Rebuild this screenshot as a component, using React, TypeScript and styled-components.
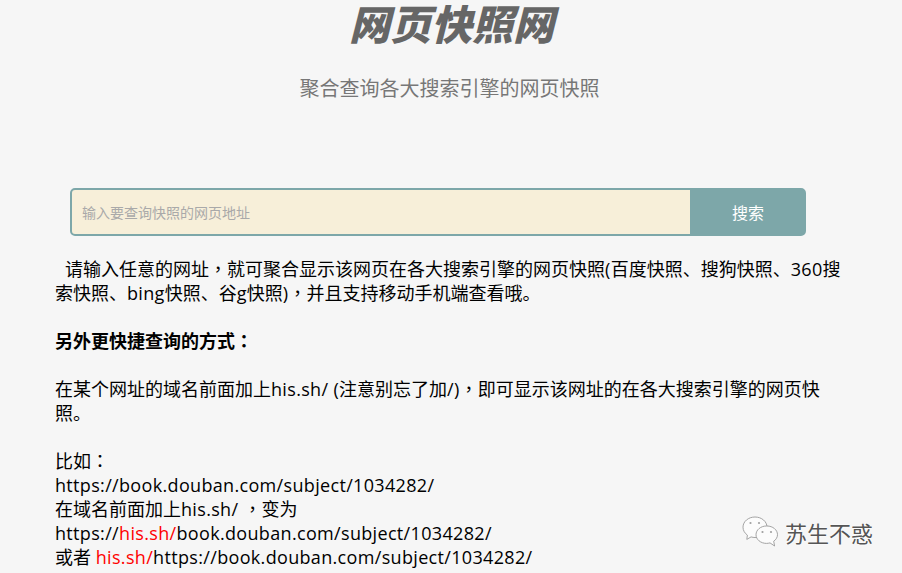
import React from "react";
import styled, { createGlobalStyle } from "styled-components";

const GlobalStyle = createGlobalStyle`
    html, body {
        margin: 0;
        padding: 0;
        height: 100%;
        overflow: hidden;
        background: #f6f6f6;
    }
    body {
        font-family: "Open Sans", "Noto Sans CJK SC", sans-serif;
    }
`;

const Page = styled.div`
    position: relative;
    width: 902px;
    height: 573px;
    overflow: hidden;
`;

const Header = styled.header`
    display: flex;
    flex-direction: column;
    align-items: center;
    padding-left: 1px;
`;

const Title = styled.h1`
    margin: 0;
    height: 46px;
    font-family: "Noto Sans CJK SC", sans-serif;
    font-size: 41px;
    line-height: 44px;
    font-weight: 900;
    font-style: italic;
    color: #666666;
`;

const Subtitle = styled.p`
    margin: 28px 4px 0 0;
    font-family: "Noto Sans CJK SC", sans-serif;
    font-size: 20px;
    line-height: 28px;
    color: #777777;
`;

const SearchForm = styled.form`
    display: flex;
    width: 736px;
    height: 48px;
    margin: 86px 0 0 70px;
    box-sizing: border-box;
    border: 2px solid #7da7a9;
    border-radius: 5px;
    background: #7da7a9;
    overflow: hidden;
`;

const SearchInput = styled.div`
    flex: 1;
    display: flex;
    align-items: center;
    padding-left: 10px;
    background: #f7efd9;
    font-family: "Noto Sans CJK SC", sans-serif;
    font-size: 14px;
    color: #a9a9a9;
`;

const SearchButton = styled.button`
    width: 114px;
    border: 0;
    padding: 0 0 0 2px;
    background: #7da7a9;
    color: #ffffff;
    font-family: "Noto Sans CJK SC", sans-serif;
    font-size: 16px;
`;

const Content = styled.div`
    width: 790px;
    margin: 21px 0 0 55px;
    font-size: 18px;
    line-height: 24px;
    color: #000000;
`;

const Paragraph = styled.p<{ $indent?: boolean }>`
    margin: 0 0 24px;
    text-indent: ${(props) => (props.$indent ? "10px" : "0")};
`;

const Latin = styled.span`
    display: inline-block;
    text-indent: 0;
    white-space: pre;
    letter-spacing: 0.33px;
`;

// centred full-width punctuation, as in the reference
const Punct = styled.span`
    display: inline-block;
    text-indent: 0;
    font-family: "Noto Sans CJK TC", sans-serif;
    line-height: 1;
`;

const Mark = styled(Latin)`
    color: #ff0000;
`;

const Watermark = styled.div`
    position: absolute;
    right: 29px;
    bottom: 25px;
    display: flex;
    align-items: center;
    gap: 7px;
    font-family: "Noto Sans CJK SC", sans-serif;
    font-size: 22px;
    color: #555555;
    text-shadow: 0 0 2px #ffffff, 0 0 2px #ffffff;
`;

const WechatIcon = () => (
    <svg width="36" height="32" viewBox="0 0 36 32" fill="#fcfcfc" stroke="#9a9a9a" strokeWidth="0.9">
        <path d="M13 1C6.4 1 1 5.5 1 11.2c0 3.2 1.7 6 4.4 7.9L4.8 23.4l4.3-2.5c1.3.4 2.6.6 3.9.6 6.6 0 12-4.6 12-10.3S19.6 1 13 1z" />
        <path d="M24.5 10c-5.8 0-10.5 3.9-10.5 8.7s4.7 8.7 10.5 8.7c1.2 0 2.4-.2 3.5-.5l4.6 3.1-.9-4.8c2.4-1.6 3.8-3.9 3.8-6.5 0-4.8-4.7-8.7-10.5-8.7z" />
        <circle cx="8.5" cy="7" r="1.1" fill="#a0a0a0" stroke="none" />
        <circle cx="17" cy="7" r="1.1" fill="#a0a0a0" stroke="none" />
        <circle cx="20.5" cy="16" r="1.1" fill="#a0a0a0" stroke="none" />
        <circle cx="29" cy="16" r="1.1" fill="#a0a0a0" stroke="none" />
    </svg>
);

export default function App() {
    return (
        <Page>
            <GlobalStyle />
            <Header>
                <Title>网页快照网</Title>
                <Subtitle>聚合查询各大搜索引擎的网页快照</Subtitle>
            </Header>
            <SearchForm>
                <SearchInput>输入要查询快照的网页地址</SearchInput>
                <SearchButton type="button">搜索</SearchButton>
            </SearchForm>
            <Content>
                <Paragraph $indent>
                    请输入任意的网址<Punct>，</Punct>就可聚合显示该网页在各大搜索引擎的网页快照<Latin>(</Latin>百度快照、搜狗快照、<Latin>360</Latin>搜索快照、<Latin>bing</Latin>快照、谷<Latin>g</Latin>快照<Latin>)</Latin><Punct>，</Punct>并且支持移动手机端查看哦。
                </Paragraph>
                <Paragraph>
                    <b>另外更快捷查询的方式<Punct>：</Punct></b>
                </Paragraph>
                <Paragraph>
                    在某个网址的域名前面加上<Latin>his.sh/ (</Latin>注意别忘了加<Latin>/)</Latin><Punct>，</Punct>即可显示该网址的在各大搜索引擎的网页快
                    <br />
                    照。
                </Paragraph>
                <Paragraph>
                    比如<Punct>：</Punct>
                    <br />
                    <Latin>https://book.douban.com/subject/1034282/</Latin>
                    <br />
                    在域名前面加上<Latin>his.sh/ </Latin><Punct>，</Punct>变为
                    <br />
                    <Latin>https://</Latin><Mark>his.sh/</Mark><Latin>book.douban.com/subject/1034282/</Latin>
                    <br />
                    或者 <Mark>his.sh/</Mark><Latin>https://book.douban.com/subject/1034282/</Latin>
                </Paragraph>
            </Content>
            <Watermark>
                <WechatIcon />
                苏生不惑
            </Watermark>
        </Page>
    );
}
